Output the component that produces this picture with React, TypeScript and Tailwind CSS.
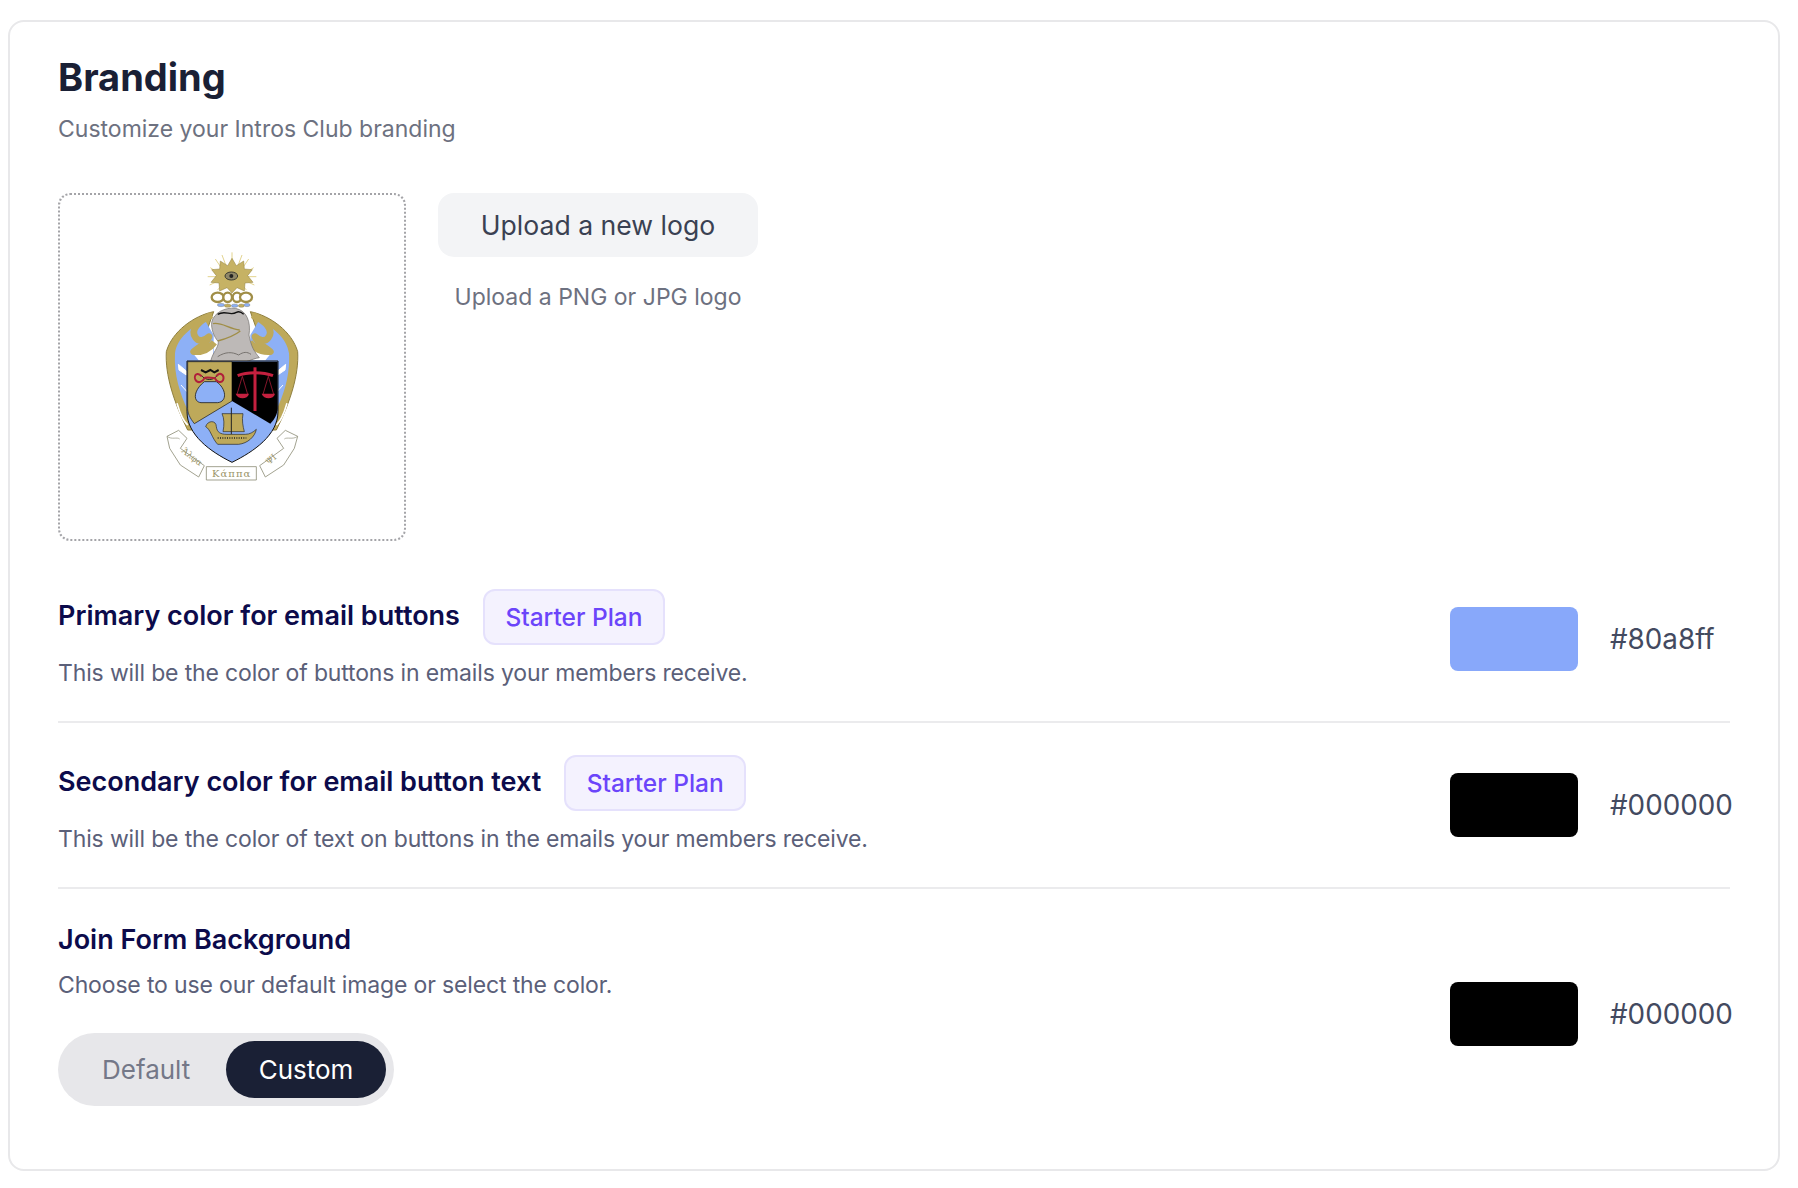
const font = "font-['Inter',sans-serif]";

const Crest = () => (
  <svg width="210" height="260" viewBox="-10 6 630 780">
    {/* rays + star */}
    <path d="M305 52V100M275 60L290 100M335 60L320 100M255 72L278 106M355 72L332 106M240 98L270 118M370 98L340 118M232 125H268M378 125H342M238 150L270 135M372 150L340 135M262 165L278 145M348 165L332 145" stroke="#e3d48f" strokeWidth="3" />
    <path d="M305 70L318 92L340 78L342 102L366 104L352 122L368 142L344 144L342 168L320 158L305 174L290 158L268 168L266 144L242 142L258 122L244 104L268 102L270 78L292 92Z" fill="#c6b264" stroke="#8f7f3e" strokeWidth="1.5" />
    <ellipse cx="303" cy="123" rx="19" ry="12" fill="#8f8768" stroke="#3a3a30" strokeWidth="3" />
    <circle cx="303" cy="123" r="6" fill="#222" />
    {/* crown */}
    <g fill="#fff" stroke="#a08e47" strokeWidth="7">
      <ellipse cx="262" cy="187" rx="18" ry="14" />
      <ellipse cx="292" cy="187" rx="13" ry="14" />
      <ellipse cx="320" cy="187" rx="13" ry="14" />
      <ellipse cx="347" cy="187" rx="18" ry="14" />
    </g>
    <g stroke="#6f6a4a" strokeWidth="1">
      <ellipse cx="272" cy="210" rx="11" ry="5" fill="#8db0f6" />
      <ellipse cx="292" cy="212" rx="10" ry="5" fill="#c2ad5f" />
      <ellipse cx="313" cy="212" rx="10" ry="5" fill="#8db0f6" />
      <ellipse cx="333" cy="212" rx="9" ry="5" fill="#c2ad5f" />
      <ellipse cx="350" cy="210" rx="9" ry="5" fill="#8db0f6" />
    </g>
    {/* mantling, left and mirrored right */}
    {[0, 1].map((side) => (
      <g key={side} transform={side ? "matrix(-1 0 0 1 610 0)" : undefined}>
        <path d="M250 230C190 242 125 290 108 350C104 420 130 500 172 585L225 585L225 300Z" fill="#bea95a" stroke="#8f7f3e" strokeWidth="3" strokeLinejoin="round" />
        <path d="M225 258C182 275 140 310 134 355C130 420 150 480 172 525L172 380L250 378L250 300Z" fill="#8db0f6" />
        <path d="M190 358L205 376H248L248 335Z" fill="#fff" />
        <path d="M144 388L168 408L168 420L146 405ZM152 450L170 470" fill="#fff" stroke="#fff" strokeWidth="3" />
        <path d="M244 240C205 258 178 285 196 308C205 322 225 316 236 305C226 330 205 336 190 350C215 352 238 340 252 322" fill="none" stroke="#bea95a" strokeWidth="20" strokeLinejoin="round" />
        <path d="M140 505C150 540 160 560 172 570" fill="none" stroke="#fff" strokeWidth="5" />
      </g>
    ))}
    {/* helmet */}
    <path d="M244 262C250 233 285 216 315 220C350 226 362 262 356 300C362 335 372 350 387 368C362 372 345 385 335 380C320 385 305 395 290 400C280 390 260 380 241 378C248 350 264 340 264 320C250 305 242 280 244 262Z" fill="#bdb9b7" stroke="#6f6c6a" strokeWidth="2" />
    <path d="M262 238C285 224 300 244 318 232C326 228 334 232 340 238" fill="none" stroke="#111" strokeWidth="4" />
    <path d="M248 266C270 260 295 280 328 285M262 318C285 312 312 302 330 288" fill="none" stroke="#a08e47" strokeWidth="4" />
    <path d="M262 365C285 350 305 350 325 360C340 350 350 350 362 358" fill="none" stroke="#77736f" strokeWidth="3" />
    {/* scroll */}
    <g fill="#fff" stroke="#8f8f7a" strokeWidth="2.5" strokeLinejoin="round">
      <path d="M150 640L222 692L205 726L150 690L118 640L110 604L145 586L170 610Z" />
      <path d="M460 640L388 692L405 726L460 690L492 640L502 604L465 586L440 610Z" />
      <path d="M228 695H378V735H228Z" />
    </g>
    <path d="M110 604C125 615 140 605 148 612" fill="none" stroke="#8f8f7a" strokeWidth="2" />
    <path d="M502 604C487 615 470 605 462 612" fill="none" stroke="#8f8f7a" strokeWidth="2" />
    {/* shield */}
    <path d="M170 378H443V530C443 600 370 650 305 682C240 650 170 600 170 530Z" fill="#8db0f6" stroke="#111" strokeWidth="3" />
    <path d="M172 380H305V498L192 566C178 548 172 535 172 520Z" fill="#bea95a" stroke="#111" strokeWidth="2" />
    <path d="M305 380H442V520C442 535 434 552 420 566L305 498Z" fill="#000" />
    {/* purse */}
    <path d="M222 440C190 465 186 500 212 503H262C292 500 288 460 258 440Z" fill="#8db0f6" stroke="#222" strokeWidth="2.5" />
    <path d="M212 405L226 412L240 405L252 412L265 405" fill="none" stroke="#111" strokeWidth="6" />
    <path d="M212 420C225 438 250 438 262 420" fill="none" stroke="#222" strokeWidth="3" />
    <path d="M214 424C196 405 188 428 198 438C206 446 218 438 222 430C226 424 236 428 254 430C258 440 272 446 278 436C284 420 268 408 258 424" fill="none" stroke="#b01f3a" strokeWidth="6" />
    {/* scales */}
    <g stroke="#c4203f" fill="none">
      <path d="M374 397V528" strokeWidth="9" />
      <path d="M322 422C350 410 398 410 428 422" strokeWidth="9" />
      <path d="M336 424L320 478M336 424L352 478M414 424L398 478M414 424L430 478" strokeWidth="2" />
    </g>
    <path d="M316 476H356C352 494 322 494 316 476ZM394 476H434C430 494 400 494 394 476Z" fill="#c4203f" />
    {/* ship */}
    <path d="M275 536H338C334 555 338 575 342 590H278C282 570 282 550 275 536Z" fill="#bea95a" stroke="#222" strokeWidth="2" />
    <path d="M303 518V598" stroke="#222" strokeWidth="3" />
    <path d="M226 575C232 555 258 555 258 575C260 592 270 598 290 598H345C358 598 368 592 378 583C374 605 352 625 325 628H262C245 610 240 582 226 575Z" fill="#bea95a" stroke="#222" strokeWidth="2" />
    <path d="M262 609H348" stroke="#222" strokeWidth="4" strokeDasharray="3 4" />
    {/* motto */}
    <text x="304" y="727" textAnchor="middle" className="font-['DejaVu_Serif',serif]" fontSize="30" fill="#9a9468" letterSpacing="3">Κάππα</text>
    <text x="180" y="672" transform="rotate(38 180 672)" textAnchor="middle" className="font-['DejaVu_Serif',serif]" fontSize="26" fill="#9a9468">Άλφα</text>
    <text x="428" y="680" transform="rotate(-42 428 680)" textAnchor="middle" className="font-['DejaVu_Serif',serif]" fontSize="26" fill="#9a9468">ΨΙ</text>
  </svg>
);

const Badge = () => (
  <span className="inline-flex h-14 w-[182px] items-center justify-center rounded-xl border-2 border-[#e5e1fc] bg-[#f4f2fe] text-[24.5px] font-medium text-[#6b45fa]">
    Starter Plan
  </span>
);

const Swatch = ({ color, hex }: { color: string; hex: string }) => (
  <div className="flex items-center">
    <div className="h-16 w-32 rounded-lg" style={{ backgroundColor: color }} />
    <span className="ml-8 mt-[2px] w-[120px] whitespace-nowrap text-[27.8px] text-[#434a60]">{hex}</span>
  </div>
);

const ColorRow = ({ title, desc, color, hex }: { title: string; desc: string; color: string; hex: string }) => (
  <div className="flex items-center justify-between border-b-2 border-[#ebebed] py-8">
    <div>
      <div className="flex items-center gap-[23px]">
        <h3 className="-mt-px text-[27px] font-semibold text-[#0c0b4b]">{title}</h3>
        <Badge />
      </div>
      <p className="mt-3 text-[23px] leading-8 tracking-[-0.15px] text-[#5b6079]">{desc}</p>
    </div>
    <Swatch color={color} hex={hex} />
  </div>
);

export default function App() {
  return (
    <div className={`min-h-screen bg-white pl-2 pr-[18px] pt-5 ${font}`}>
      <section className="h-[1151px] rounded-2xl border-2 border-[#e8e8ea] px-12 pt-[27px]">
        <h1 className="text-[38px] font-bold leading-[56px] text-[#1a2035]">Branding</h1>
        <p className="mt-2 text-[23px] leading-8 text-[#6d7180]">Customize your Intros Club branding</p>

        <div className="mt-12 flex items-start gap-8">
          <div className="flex h-[348px] w-[348px] items-center justify-center rounded-xl border-2 border-dotted border-[#a4a4a8]">
            <Crest />
          </div>
          <div className="flex flex-col items-center">
            <button className="h-16 w-[320px] rounded-2xl bg-[#f3f4f6] pt-0.5 text-[26.6px] text-[#3a4152]">
              Upload a new logo
            </button>
            <p className="mt-6 text-[23px] leading-8 text-[#6d7180]">Upload a PNG or JPG logo</p>
          </div>
        </div>

        <div className="mt-4">
          <ColorRow
            title="Primary color for email buttons"
            desc="This will be the color of buttons in emails your members receive."
            color="#88a8fa"
            hex="#80a8ff"
          />
          <ColorRow
            title="Secondary color for email button text"
            desc="This will be the color of text on buttons in the emails your members receive."
            color="#000000"
            hex="#000000"
          />
        </div>
        <div className="flex items-center justify-between pt-[33px]">
          <div>
            <h3 className="text-[27px] font-semibold leading-9 text-[#0c0b4b]">Join Form Background</h3>
            <p className="mt-[11px] text-[23px] leading-8 tracking-[-0.15px] text-[#5b6079]">Choose to use our default image or select the color.</p>
            <div className="mt-8 flex h-[73px] w-[336px] items-center justify-between rounded-full bg-[#e7e7ea] pl-11 pr-2 text-[26px]">
              <span className="text-[#747888]">Default</span>
              <span className="flex h-[57px] w-40 items-center justify-center rounded-full bg-[#1a2035] text-white">Custom</span>
            </div>
          </div>
          <Swatch color="#000000" hex="#000000" />
        </div>
      </section>
    </div>
  );
}
